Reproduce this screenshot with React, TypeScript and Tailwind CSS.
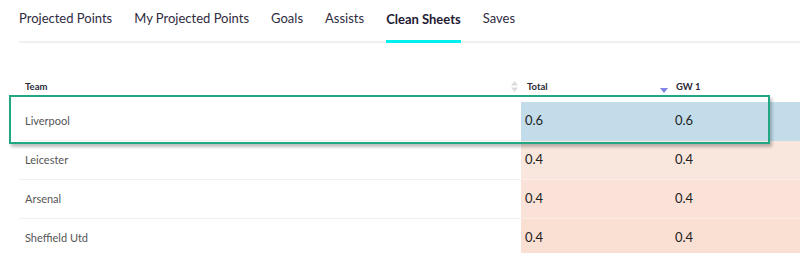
import React from 'react';

const tabs = ['Projected Points', 'My Projected Points', 'Goals', 'Assists', 'Clean Sheets', 'Saves'];

const rows = [
  { team: 'Liverpool', total: '0.6', gw: '0.6', bg: 'bg-[#c2dcea]', line: 'border-[#c2dcea]' },
  { team: 'Leicester', total: '0.4', gw: '0.4', bg: 'bg-[#f9e6dd]', line: 'border-[#fbeee8]' },
  { team: 'Arsenal', total: '0.4', gw: '0.4', bg: 'bg-[#fae2d8]', line: 'border-[#fbebe4]' },
  { team: 'Sheffield Utd', total: '0.4', gw: '0.4', bg: 'bg-[#fadfd3]', line: 'border-[#fadfd3]' },
];

const SortBoth = () => (
  <svg width="7" height="11" viewBox="0 0 7 11" className="absolute left-[-10px] top-[1px]">
    <path d="M3.5 0L7 4.5H0z" fill="#dcdcdc" />
    <path d="M3.5 11L7 6.5H0z" fill="#dcdcdc" />
  </svg>
);

const SortDown = () => (
  <svg width="8" height="5" viewBox="0 0 8 5" className="absolute left-[-10px] top-[8px]">
    <path d="M0 0H8L4 5z" fill="#7f84e6" />
  </svg>
);

export default function App() {
  return (
    <div className="relative w-[800px] h-[253px] overflow-hidden bg-white font-['Lato',sans-serif]">
      <nav className="ml-[19px] flex h-[43px] gap-[22px] border-b-2 border-[#f0f0f0]">
        {tabs.map((t) => (
          <div
            key={t}
            className={
              t === 'Clean Sheets'
                ? 'flex items-center pb-[1px] text-[13px] font-bold text-[#1f1a33] border-b-[3px] border-[#00f0f0] mb-[-2px]'
                : 'flex items-center pb-[4px] text-[13px] text-[#2f2b40]'
            }
          >
            {t}
          </div>
        ))}
      </nav>

      <div className="ml-[19px] mt-[37px]">
        <div className="flex h-[22px] text-[9.5px] font-bold text-[#2a2a35] leading-[14px]">
          <div className="w-[502px] pl-[6px]">Team</div>
          <div className="relative w-[149px] pl-[6px]">
            <SortBoth />
            Total
          </div>
          <div className="relative flex-1 pl-[6px]">
            <SortDown />
            GW 1
          </div>
        </div>

        {rows.map((r) => (
          <div key={r.team} className="flex h-[39px]">
            <div className="w-[502px] flex items-center pl-[6px] text-[11px] text-[#555] border-b border-[#f0f0f0]">
              {r.team}
            </div>
            <div className={`w-[149px] flex items-center pl-[4px] text-[13px] text-[#222] border-b ${r.bg} ${r.line}`}>
              {r.total}
            </div>
            <div className={`flex-1 flex items-center pl-[5px] text-[13px] text-[#222] border-b ${r.bg} ${r.line}`}>
              {r.gw}
            </div>
          </div>
        ))}
      </div>

      <div className="absolute left-[9px] top-[95px] w-[761px] h-[49px] border-2 border-[#1fa883] shadow-[2px_3px_3px_rgba(0,0,0,0.25)]" />
    </div>
  );
}
